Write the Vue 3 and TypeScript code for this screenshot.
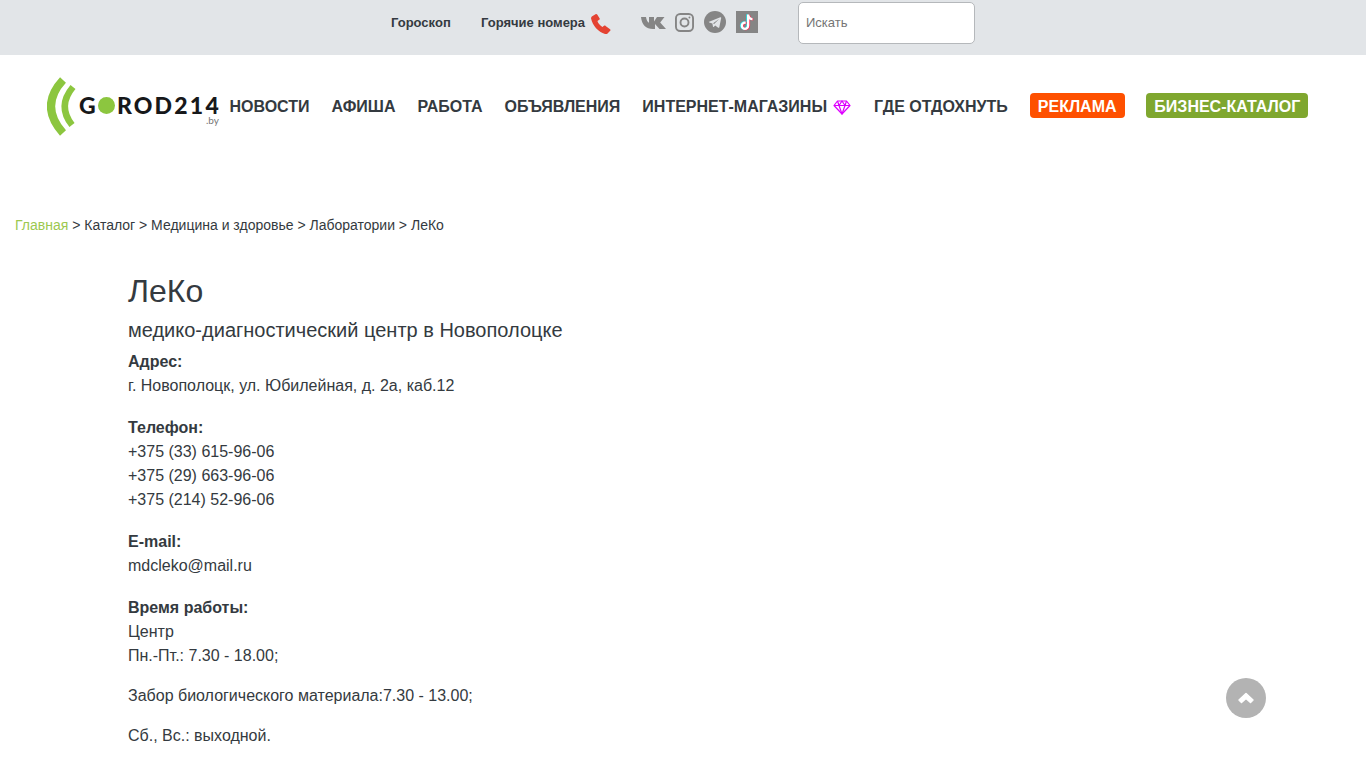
<script setup lang="ts">
const navItems: string[] = ['НОВОСТИ', 'АФИША', 'РАБОТА', 'ОБЪЯВЛЕНИЯ']
const crumbs: string[] = ['Каталог', 'Медицина и здоровье', 'Лаборатории', 'ЛеКо']
</script>

<template>
  <div class="page">
    <header class="topbar">
      <a class="toplink horo">Гороскоп</a>
      <a class="toplink hot">Горячие номера</a>
      <svg class="phone" width="20" height="20" viewBox="1.200 .6 16.800 18.400" preserveAspectRatio="none">
        <path d="M2.2 2.600 5 .8c.6-.3 1.100-.2 1.400.3l2 3.500c.3.5.2 1-.3 1.300L6.600 7c.5 1.900 2.300 4.400 4.200 5.500l1.300-1c.5-.3 1-.3 1.400.1l3.700 3c.5.400.500 1 .1 1.400l-2 2.400c-.6.700-1.400.9-2.300.6C7.200 17 2.600 11.500 1.300 5c-.2-1 .2-1.900.9-2.400Z" fill="#e44332" />
      </svg>
      <svg class="vk" width="25" height="14" viewBox="0 0 25 14">
        <path d="M0 1h5c.4 2.800 1.500 5 3 5.800V1h5v4.500L16 1h7.500l-4.300 5.500L25 13h-6.500l-4.500-5v5h-2C5 13 .8 9 0 1Z" fill="#858585" />
      </svg>
      <svg class="insta" width="19" height="19" viewBox="0 0 20 20" fill="none" stroke="#858585" stroke-width="2">
        <rect x="1" y="1" width="18" height="18" rx="4.500" />
        <circle cx="10" cy="10" r="4.200" />
        <circle cx="15.200" cy="4.800" r="1" fill="#858585" stroke="none" />
      </svg>
      <svg class="tg" width="22" height="22" viewBox="0 0 22 22">
        <circle cx="11" cy="11" r="11" fill="#858585" />
        <path d="M4.500 10.900 16.300 6.300c.6-.2 1 .1.900.8l-1.900 9.100c-.1.600-.6.800-1.100.5l-3-2.200-1.500 1.400c-.3.300-.6.200-.7-.2l-.6-3.300-3.100-1c-.6-.2-.6-.3-.1-.5Zm4.600 1.400 6-4.400-5 5.200Z" fill="#e1e4e7" fill-rule="evenodd" />
      </svg>
      <svg class="tt" width="22" height="22" viewBox="0 0 22 22">
        <rect width="22" height="22" fill="#858585" />
        <path d="M11.800 3.500h2.200c.2 2 1.400 3.300 3.300 3.500v2.300c-1.200 0-2.300-.4-3.200-1v6.200c0 2.800-2 4.500-4.300 4.500-2.400 0-4.300-1.900-4.300-4.300 0-2.600 2.200-4.600 5-4.200v2.400c-1.400-.4-2.700.5-2.700 1.800 0 1.100.9 2 2 2 1.200 0 2-.9 2-2.200V3.500Z" fill="#25e0e6" transform="translate(-1.600 -.3)" />
        <path d="M11.800 3.500h2.200c.2 2 1.400 3.300 3.300 3.500v2.300c-1.200 0-2.300-.4-3.200-1v6.200c0 2.800-2 4.500-4.300 4.500-2.400 0-4.300-1.900-4.300-4.300 0-2.600 2.200-4.600 5-4.200v2.400c-1.400-.4-2.700.5-2.700 1.800 0 1.100.9 2 2 2 1.200 0 2-.9 2-2.200V3.500Z" fill="#fe2c55" transform="translate(0 .3)" />
        <path d="M11.800 3.500h2.200c.2 2 1.400 3.300 3.300 3.500v2.300c-1.200 0-2.300-.4-3.200-1v6.200c0 2.800-2 4.500-4.300 4.500-2.400 0-4.300-1.900-4.300-4.300 0-2.600 2.200-4.600 5-4.200v2.400c-1.400-.4-2.700.5-2.700 1.800 0 1.100.9 2 2 2 1.200 0 2-.9 2-2.200V3.500Z" fill="#fff" transform="translate(-.8 0)" />
      </svg>
      <input class="search" type="text" placeholder="Искать" />
    </header>

    <nav class="mainnav">
      <div class="logo">
        <svg class="waves" width="34" height="62" viewBox="0 0 34 62" fill="none" stroke="#8cc63f">
          <path d="M16 5Q-8 31 16 58" stroke-width="8" />
          <path d="M26 12Q10 31 25 50" stroke-width="6.500" />
        </svg>
        <span class="wordmark">G<i class="dot"></i>ROD214</span>
        <span class="by">.by</span>
      </div>
      <a v-for="item in navItems" :key="item" class="navlink">{{ item }}</a>
      <a class="navlink shops">
        ИНТЕРНЕТ-МАГАЗИНЫ
        <svg width="18" height="15" viewBox="0 0 18 15" fill="none" stroke="#dd00ff" stroke-width="1.200" stroke-linejoin="round">
          <path d="M4.500 1h9L17 5.500 9 14 1 5.500 4.500 1Z" />
          <path d="M1 5.500h16M6 5.500 9 14l3-8.500M4.500 1 6 5.500 9 1l3 4.500L13.500 1" />
        </svg>
      </a>
      <a class="navlink after-shops">ГДЕ ОТДОХНУТЬ</a>
      <a class="navlink pill orange">РЕКЛАМА</a>
      <a class="navlink pill green">БИЗНЕС-КАТАЛОГ</a>
    </nav>

    <div class="breadcrumbs">
      <a class="home">Главная</a>
      <template v-for="c in crumbs" :key="c"> &gt; {{ c }}</template>
    </div>

    <main class="content">
      <h1>ЛеКо</h1>
      <h2>медико-диагностический центр в Новополоцке</h2>
      <p><b>Адрес:</b><br />г. Новополоцк, ул. Юбилейная, д. 2а, каб.12</p>
      <p><b>Телефон:</b><br />+375 (33) 615-96-06<br />+375 (29) 663-96-06<br />+375 (214) 52-96-06</p>
      <p><b>E-mail:</b><br />mdcleko@mail.ru</p>
      <p class="tight"><b>Время работы:</b><br />Центр<br />Пн.-Пт.: 7.30 - 18.00;</p>
      <p class="tight">Забор биологического материала:7.30 - 13.00;</p>
      <p class="tight">Сб., Вс.: выходной.</p>
    </main>

    <button class="totop" type="button" aria-label="Наверх">
      <svg width="18" height="12" viewBox="0 0 18 12">
        <path d="M9 1.500 16 8l-2.500 2.500L9 6.500l-4.500 4L2 8Z" fill="#fff" stroke="#fff" stroke-width="1.500" stroke-linejoin="round" />
      </svg>
    </button>
  </div>
</template>

<style>
html, body { margin: 0; background: #fff; }
</style>

<style scoped>
.page {
  font-family: "Liberation Sans", Arial, sans-serif;
  font-size: 16px;
  line-height: 24px;
  color: #343a40;
  height: 768px;
  overflow: hidden;
}
.topbar {
  height: 55px;
  background: #e2e5e8;
  display: flex;
  align-items: flex-start;
  padding-left: 391px;
  box-sizing: border-box;
}
.toplink {
  font-size: 13px;
  font-weight: 700;
  line-height: 20px;
  margin-top: 13px;
  flex: none;
  white-space: nowrap;
}
.horo { width: 60px; margin-right: 30px; }
.hot { width: 104px; margin-right: 6px; }
.phone { margin-top: 14px; margin-right: 30px; }
.vk { margin-top: 16px; margin-right: 9px; }
.insta { margin-top: 13px; margin-right: 10px; }
.tg { margin-top: 11px; margin-right: 10px; }
.tt { margin-top: 11px; margin-right: 40px; }
.search {
  width: 177px;
  height: 42px;
  margin-top: 2px;
  box-sizing: border-box;
  border: 1px solid #b5b8bb;
  border-radius: 5px;
  background: #fff;
  padding: 0 7px 2px 7px;
  font: 13px "Liberation Sans", Arial, sans-serif;
  outline: none;
}
.search::placeholder { color: #757575; opacity: 1; }
.mainnav {
  display: flex;
  align-items: flex-start;
  padding-left: 47px;
  height: 125px;
  box-sizing: border-box;
}
.logo {
  position: relative;
  width: 172px;
  height: 60px;
  margin-top: 21px;
  margin-right: 10.5px;
  flex: none;
}
.waves { position: absolute; left: 0; top: -1px; }
.wordmark {
  position: absolute;
  left: 32px;
  top: 20px;
  font-family: Lato, sans-serif;
  font-weight: 900;
  font-size: 23px;
  line-height: 18px;
  letter-spacing: 2.2px;
  color: #17181a;
  white-space: nowrap;
  display: flex;
  align-items: center;
}
.dot {
  display: inline-block;
  width: 17px;
  height: 17px;
  margin: 0 1.5px 0 .5px;
  border-radius: 50%;
  background: #8cc63f;
}
.by {
  position: absolute;
  right: 0;
  top: 40px;
  font-family: Lato, sans-serif;
  font-size: 10px;
  line-height: 8px;
  color: #777;
}
.navlink {
  font-weight: 700;
  font-size: 16px;
  line-height: 18px;
  margin-top: 43px;
  margin-right: 22px;
  padding: 0;
  white-space: nowrap;
}
.shops { display: flex; align-items: center; gap: 6px; margin-right: 23px; }
.shops svg { flex: none; }
.pill {
  margin-top: 38px;
  padding: 5px 8px 2px;
  border-radius: 4px;
  color: #fff;
}
.after-shops { margin-right: 22px; }
.orange { background: #fe5000; margin-right: 21.800px; }
.green { background: #7fa72f; margin-right: 0; }
.breadcrumbs {
  margin-top: 33px;
  padding-left: 15px;
  font-size: 14px;
  line-height: 24px;
  color: #343a40;
}
.home { color: #9cc850; }
.content {
  padding-left: 128px;
  margin-top: 35px;
}
h1 {
  margin: 0;
  font-size: 32px;
  font-weight: 400;
  line-height: 38px;
}
h2 {
  margin: 8px 0 8px;
  font-size: 20px;
  font-weight: 400;
  line-height: 24px;
}
p {
  margin: 0 0 18px;
}
p.tight { margin-bottom: 16px; }
.totop {
  position: fixed;
  left: 1226px;
  top: 678px;
  width: 40px;
  height: 40px;
  border: 0;
  padding: 0;
  border-radius: 50%;
  background: #b3b3b3;
  display: flex;
  align-items: center;
  justify-content: center;
}
</style>
